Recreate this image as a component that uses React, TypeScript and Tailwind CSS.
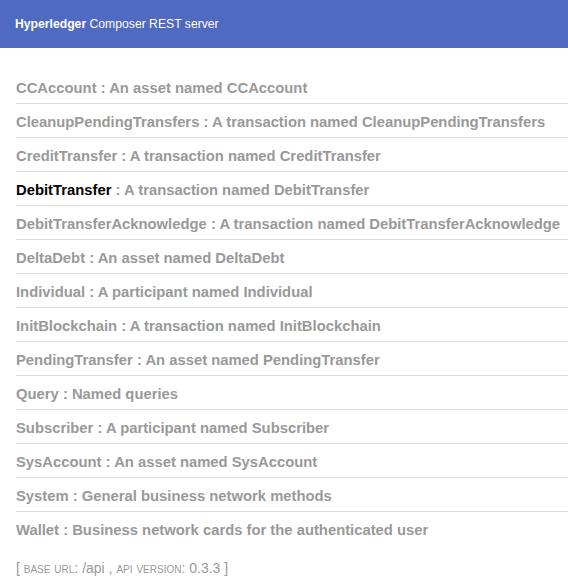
const items: [string, string][] = [
  ["CCAccount", "An asset named CCAccount"],
  ["CleanupPendingTransfers", "A transaction named CleanupPendingTransfers"],
  ["CreditTransfer", "A transaction named CreditTransfer"],
  ["DebitTransfer", "A transaction named DebitTransfer"],
  ["DebitTransferAcknowledge", "A transaction named DebitTransferAcknowledge"],
  ["DeltaDebt", "An asset named DeltaDebt"],
  ["Individual", "A participant named Individual"],
  ["InitBlockchain", "A transaction named InitBlockchain"],
  ["PendingTransfer", "An asset named PendingTransfer"],
  ["Query", "Named queries"],
  ["Subscriber", "A participant named Subscriber"],
  ["SysAccount", "An asset named SysAccount"],
  ["System", "General business network methods"],
  ["Wallet", "Business network cards for the authenticated user"],
];

export default function App() {
  return (
    <div className="w-[568px] h-[586px] bg-white overflow-hidden font-['Liberation_Sans',Arial,sans-serif]">
      <div className="h-[48px] bg-[#5069c1] flex items-center px-[15px] text-white text-[12.2px] pt-[1px]">
        <span className="font-bold">Hyperledger</span>
        <span>&nbsp;Composer REST server</span>
      </div>
      <div className="pl-4 pt-[22px]">
        {items.map(([name, desc], i) => (
          <div
            key={name}
            className={`h-[34px] flex items-center pt-[3px] text-[14.8px] font-bold text-[#999] ${
              i < items.length - 1 ? "border-b border-[#ddd]" : ""
            }`}
          >
            <span className={name === "DebitTransfer" ? "text-black" : ""}>{name}</span>
            <span>&nbsp;: {desc}</span>
          </div>
        ))}
      </div>
      <div className="pl-4 pt-[12px] text-[14px] text-[#999]">
        [ <span className="[font-variant:small-caps]">base url</span>: /api ,{" "}
        <span className="[font-variant:small-caps]">api version</span>: 0.3.3 ]
      </div>
    </div>
  );
}
